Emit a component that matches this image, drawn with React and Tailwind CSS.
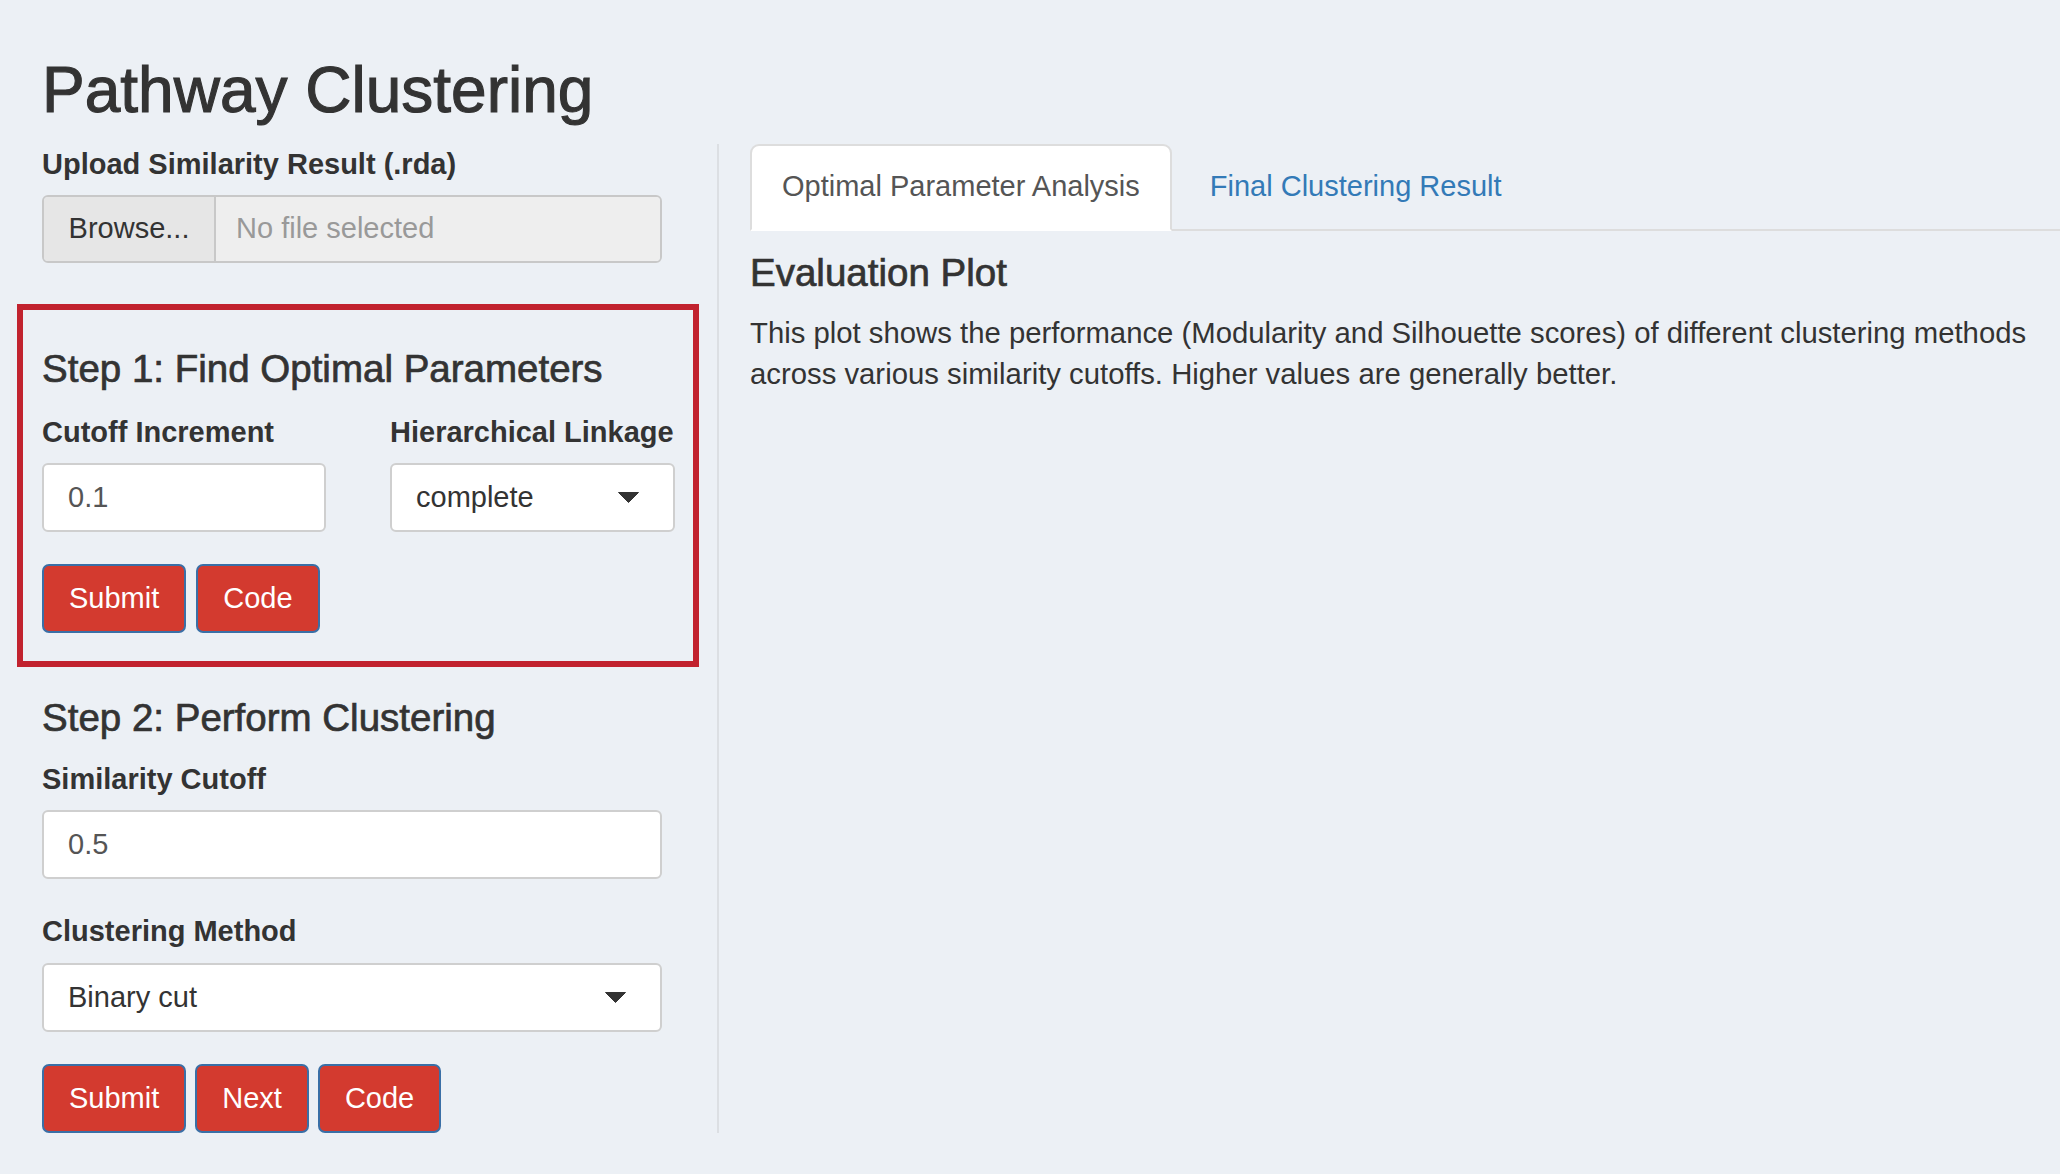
import React from "react";

const font = { fontFamily: '"Liberation Sans", Arial, sans-serif' };

function Label({ children }) {
  return <div className="text-[29px] leading-[41px] font-bold text-[#333]">{children}</div>;
}

function Heading({ children, className = "" }) {
  // Helvetica Neue medium look: regular face with a thin stroke
  return (
    <h3 className={`text-[38.5px] leading-[44px] text-[#333] [-webkit-text-stroke:0.7px_#333] ${className}`}>
      {children}
    </h3>
  );
}

function TextBox({ value, className = "" }) {
  return (
    <div
      className={`h-[69px] bg-white border-2 border-[#cfcfcf] rounded-[6px] flex items-center pl-[24px] text-[29px] text-[#555] ${className}`}
    >
      {value}
    </div>
  );
}

function SelectBox({ value, className = "" }) {
  return (
    <div
      className={`h-[69px] bg-white border-2 border-[#cfcfcf] rounded-[6px] flex items-center justify-between pl-[24px] pr-[34px] text-[29px] text-[#333] ${className}`}
    >
      <span>{value}</span>
      <svg width="21" height="11" viewBox="0 0 21 11">
        <path d="M0.5 0.5 L20.5 0.5 L10.5 10.5 Z" fill="#333" stroke="#333" strokeLinejoin="round" />
      </svg>
    </div>
  );
}

function RedButton({ children }) {
  return (
    <button className="h-[69px] px-[25px] bg-[#d33a2f] border-2 border-[#3a6fa6] rounded-[7px] text-white text-[29px]">
      {children}
    </button>
  );
}

export default function App() {
  return (
    <div style={font} className="min-h-screen bg-[#ecf0f5] text-[#333]">
      <h1 className="pt-[50px] pl-[42px] text-[64px] leading-[80px] text-[#333] [-webkit-text-stroke:1.1px_#333]">
        Pathway Clustering
      </h1>

      <div className="mt-[14px] flex">
        {/* sidebar */}
        <div className="w-[719px] shrink-0 border-r-2 border-[#dcdfe3]">
          <div className="pl-[42px] w-[662px]">
            <Label>Upload Similarity Result (.rda)</Label>
            <div className="mt-[10px] h-[68px] flex border-2 border-[#c8c8c8] rounded-[6px] overflow-hidden text-[29px]">
              <div className="w-[172px] bg-[#e6e6e6] border-r-2 border-[#c8c8c8] flex items-center justify-center text-[#333]">
                Browse...
              </div>
              <div className="flex-1 bg-[#eeeeee] flex items-center pl-[20px] text-[#999]">
                No file selected
              </div>
            </div>
          </div>

          <div className="mt-[41px] ml-[17px] w-[682px] border-[6px] border-[#c1222e] pt-[37px] pl-[19px] pr-[18px] pb-[28px]">
            <Heading>Step 1: Find Optimal Parameters</Heading>
            <div className="mt-[21px] flex gap-[64px]">
              <div className="w-[284px]">
                <Label>Cutoff Increment</Label>
                <TextBox value="0.1" className="mt-[10px]" />
              </div>
              <div className="w-[285px]">
                <Label>Hierarchical Linkage</Label>
                <SelectBox value="complete" className="mt-[10px]" />
              </div>
            </div>
            <div className="mt-[32px] flex gap-[10px]">
              <RedButton>Submit</RedButton>
              <RedButton>Code</RedButton>
            </div>
          </div>

          <div className="pl-[42px] w-[662px]">
            <Heading className="mt-[29px]">Step 2: Perform Clustering</Heading>
            <div className="mt-[19px]">
              <Label>Similarity Cutoff</Label>
              <TextBox value="0.5" className="mt-[10px]" />
            </div>
            <div className="mt-[32px]">
              <Label>Clustering Method</Label>
              <SelectBox value="Binary cut" className="mt-[11px]" />
            </div>
            <div className="mt-[32px] flex gap-[9px]">
              <RedButton>Submit</RedButton>
              <RedButton>Next</RedButton>
              <RedButton>Code</RedButton>
            </div>
          </div>
        </div>

        {/* main panel */}
        <div className="flex-1 pl-[31px]">
          <ul className="flex border-b-2 border-[#dddddd] text-[29px] leading-[41px]">
            <li className="-mb-[2px] mr-[4px] bg-white border-2 border-[#dddddd] border-b-transparent rounded-t-[9px] px-[30px] pt-[20px] pb-[22px] text-[#555]">
              Optimal Parameter Analysis
            </li>
            <li className="mr-[4px] border-2 border-transparent px-[32px] pt-[20px] pb-[20px] text-[#337ab7]">
              Final Clustering Result
            </li>
          </ul>
          <Heading className="mt-[20px]">Evaluation Plot</Heading>
          <p className="mt-[17px] text-[29.3px] leading-[41px] text-[#333]">
            This plot shows the performance (Modularity and Silhouette scores) of different clustering methods
            <br />
            across various similarity cutoffs. Higher values are generally better.
          </p>
        </div>
      </div>
    </div>
  );
}
